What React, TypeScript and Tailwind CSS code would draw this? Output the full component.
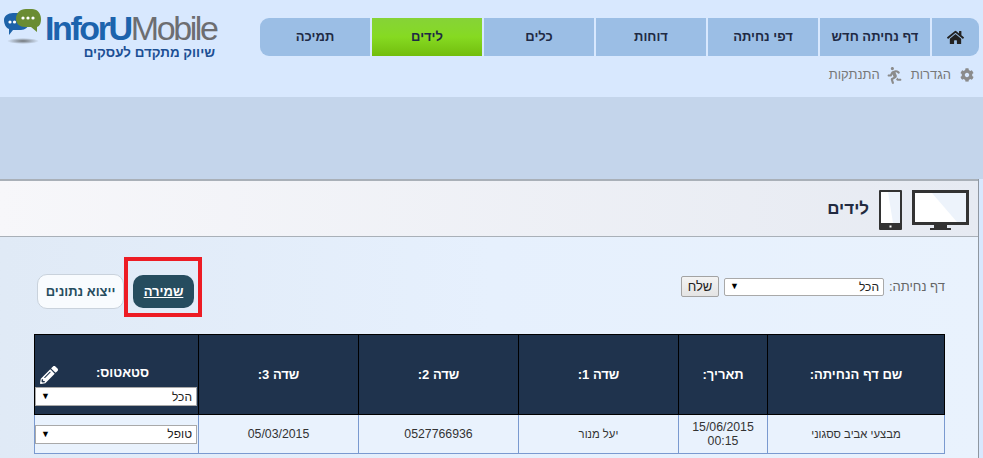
import { FaHome, FaCog, FaRunning, FaPencilAlt } from 'react-icons/fa';

const NAV = ['תמיכה', 'לידים', 'כלים', 'דוחות', 'דפי נחיתה', 'דף נחיתה חדש'];

const COLUMNS = [
  { label: 'שם דף הנחיתה:', width: 'w-[177px]' },
  { label: 'תאריך:', width: 'w-[89px]' },
  { label: 'שדה 1:', width: 'w-[160px]' },
  { label: 'שדה 2:', width: 'w-[160px]' },
  { label: 'שדה 3:', width: 'w-[160px]' },
];

function FakeSelect({ label, className }: { label: string; className: string }) {
  return (
    <div dir="ltr" className={`flex items-center justify-between bg-white border border-[#a9a9a9] text-[12px] text-[#222] pl-[5px] pr-[4px] ${className}`}>
      <span className="text-[9px] leading-none text-black">▼</span>
      <span dir="rtl">{label}</span>
    </div>
  );
}

function Logo() {
  return (
    <div className="w-[222px] flex flex-col shrink-0">
      <div className="flex items-start">
        <svg width="45" height="46" viewBox="0 0 45 46" className="shrink-0">
          <defs>
            <radialGradient id="logoShadow">
              <stop offset="0%" stopColor="#6f7478" />
              <stop offset="100%" stopColor="#d8e8fe" />
            </radialGradient>
          </defs>
          <ellipse cx="23" cy="41" rx="16" ry="3" fill="url(#logoShadow)" />
          <path d="M4 20c0-4 4-7 9-7h8c5 0 8 4 8 9s-4 8-8 8h-8l-4 5 0-6c-3-1-5-5-5-9z" fill="#1d62a8" />
          <path d="M16 19c0-6 4-10 10-10h6c5 0 9 4 9 10 0 4-1 7-4 8v5l-6-5h-6c-5 0-9-3-9-8z" fill="#6a8c32" />
          <circle cx="10" cy="22" r="1.6" fill="#fff" />
          <circle cx="14.5" cy="22" r="1.6" fill="#fff" />
          <circle cx="23" cy="18" r="1.6" fill="#fff" />
          <circle cx="28" cy="18" r="1.6" fill="#fff" />
          <circle cx="33" cy="18" r="1.6" fill="#fff" />
        </svg>
        <div className="mt-[9px] text-[34px] leading-[39px] tracking-[-2.4px] whitespace-nowrap">
          <span className="font-bold text-[#1c63ad]">InforU</span>
          <span className="text-[#6d6e71]">Mobile</span>
        </div>
      </div>
      <div dir="rtl" className="mr-[7px] -mt-[3px] text-[13.4px] leading-[16px] font-bold text-[#1c4f94]">
        שיווק מתקדם לעסקים
      </div>
    </div>
  );
}

function MonitorIcon() {
  return (
    <svg width="57" height="41" viewBox="0 0 57 41">
      <rect x="1.5" y="1.5" width="54" height="32" fill="#fff" stroke="#333" strokeWidth="3" />
      <path d="M20 3h34v29h-9z" fill="#edf3fb" />
      <rect x="22" y="35" width="13" height="3" fill="#333" />
      <rect x="18" y="38" width="21" height="2" fill="#333" />
    </svg>
  );
}

function PhoneIcon() {
  return (
    <svg width="23" height="41" viewBox="0 0 23 41">
      <rect x="0" y="0" width="23" height="40" rx="1" fill="#333" />
      <rect x="2" y="2" width="19" height="31" fill="#fff" />
      <path d="M9 2h12v31h-7z" fill="#edf3fb" />
      <rect x="10.5" y="35.5" width="2" height="2" fill="#fff" />
    </svg>
  );
}

export default function App() {
  return (
    <div className="w-[983px] h-[458px] overflow-hidden bg-[#d8e8fe] font-['Liberation_Sans',sans-serif] flex flex-col">
      {/* top bar */}
      <div className="h-[97px] shrink-0 flex justify-between">
        <Logo />
        <div className="pt-[18px] pr-[4px] flex flex-col items-end">
          <div className="flex gap-[2px] h-[38px]">
            {NAV.map((item, i) => (
              <div
                key={item}
                dir="rtl"
                className={`w-[110px] flex items-center justify-center text-[13px] font-bold text-[#1f2a44] ${
                  item === 'לידים'
                    ? 'bg-gradient-to-b from-[#86d336] via-[#86da21] to-[#72bd0c]'
                    : 'bg-[#9bbee5]'
                } ${i === 0 ? 'rounded-l-[9px]' : ''}`}
              >
                {item}
              </div>
            ))}
            <div className="w-[47px] bg-[#9bbee5] rounded-r-[9px] flex items-center justify-center">
              <FaHome size={17} color="#222" />
            </div>
          </div>
          <div dir="rtl" className="flex items-center h-[38px] pr-[5px] text-[13px] text-[#777]">
            <FaCog size={14} color="#8b8b8b" />
            <span className="mr-[9px]">הגדרות</span>
            <FaRunning size={17} color="#8b8b8b" className="mr-[8px] -scale-x-100" />
            <span className="mr-[6px]">התנתקות</span>
          </div>
        </div>
      </div>

      {/* blue band */}
      <div className="h-[82px] shrink-0 bg-[#c4d5eb]" />

      {/* panel */}
      <div className="flex-1 flex flex-col mr-[4px] border-r border-[#8f97a1]">
        {/* page title strip */}
        <div dir="rtl" className="h-[58px] shrink-0 border-t-2 border-b border-[#a9b0b8] bg-gradient-to-l from-[#e6eaf2] to-[#f7f7fa] flex items-center pr-[9px] pt-[3px] gap-[10px]">
          <MonitorIcon />
          <PhoneIcon />
          <span className="text-[17px] font-bold text-[#222a40] -mt-[3px]">לידים</span>
        </div>

        {/* content */}
        <div className="flex-1 bg-gradient-to-r from-[#e0eaf6] via-[#e6f0fd] to-[#e9f2fd] pt-[37px] pl-[34px] pr-[33px]">
          <div className="flex justify-between h-[35px] pl-[3px] mb-[25px]">
            <div className="flex items-center gap-[9px]">
              <div dir="rtl" className="w-[87px] h-[35px] rounded-[10px] border border-[#c9d2dc] bg-[#f8fbfe] flex items-center justify-center text-[13px] font-bold text-[#264d5f] whitespace-nowrap">
                ייצוא נתונים
              </div>
              <div className="relative">
                <div dir="rtl" className="w-[61px] h-[33px] rounded-[10px] bg-[#264d5f] flex items-center justify-center text-[13px] font-bold text-white underline">
                  שמירה
                </div>
                {/* red annotation frame */}
                <div className="absolute -left-[9px] -right-[8px] -top-[18px] -bottom-[9px] border-4 border-[#ed1c24]" />
              </div>
            </div>
            <div className="flex items-center gap-[5px] h-[21px] mt-[2px]">
              <div dir="rtl" className="w-[38px] h-[21px] rounded-[2px] border border-[#a3a3a3] bg-gradient-to-b from-[#f3f3f3] to-[#e4e4e4] flex items-center justify-center text-[13px] text-[#222]">
                שלח
              </div>
              <FakeSelect label="הכל" className="w-[160px] h-[18px] rounded-[2px]" />
              <span dir="rtl" className="w-[56px] text-right text-[13px] text-[#666] whitespace-nowrap">דף נחיתה:</span>
            </div>
          </div>

          <table dir="rtl" className="w-[910px] table-fixed border-collapse text-[12.3px] text-[#333]">
            <thead>
              <tr className="h-[80px]">
                {COLUMNS.map((col) => (
                  <th key={col.label} className={`${col.width} bg-[#1f334d] border border-black text-[13px] font-bold text-white`}>
                    {col.label}
                  </th>
                ))}
                <th className="w-[164px] p-0 bg-[#1f334d] border border-black text-[13px] font-bold text-white">
                  <div className="relative h-[79px] flex flex-col justify-end pl-[0px] pr-[1px] pb-[8px]">
                    <span className="leading-[16px] mb-[6px] pl-[13px]">סטאטוס:</span>
                    <FakeSelect label="הכל" className="h-[19px] font-normal" />
                    <FaPencilAlt size={18} color="#fff" className="absolute left-[5px] top-[31px]" />
                  </div>
                </th>
              </tr>
            </thead>
            <tbody>
              <tr className="h-[39px] bg-[#e9f2fd] text-center">
                <td className="border border-[#7a9ad0] text-[11.3px]">מבצעי אביב ססגוני</td>
                <td className="border border-[#7a9ad0] leading-[14px]">15/06/2015<br />00:15</td>
                <td className="border border-[#7a9ad0] text-[11.3px]">יעל מנור</td>
                <td className="border border-[#7a9ad0]">0527766936</td>
                <td className="border border-[#7a9ad0]">05/03/2015</td>
                <td className="border border-[#7a9ad0] pl-[0px] pr-[1px]">
                  <FakeSelect label="טופל" className="h-[19px]" />
                </td>
              </tr>
            </tbody>
          </table>
        </div>
      </div>
    </div>
  );
}
